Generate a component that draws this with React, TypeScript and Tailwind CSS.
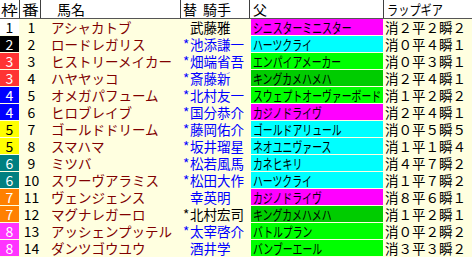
import React from "react";

type Row = {
  f: number;
  n: number;
  name: string;
  mark: string;
  jockey: string;
  blue: boolean;
  sire: string;
  sc: string;
  lap: string;
};

const M = "bg-[#ff00ff]";
const C = "bg-[#00ffff]";
const G = "bg-[#00ff00]";
const D = "bg-[#00cc00]";

const rows: Row[] = [
  { f: 1, n: 1, name: "アシャカトブ", mark: "", jockey: "武藤雅", blue: false, sire: "シニスターミニスター", sc: M, lap: "消２平２瞬２" },
  { f: 2, n: 2, name: "ロードレガリス", mark: "*", jockey: "池添謙一", blue: true, sire: "ハーツクライ", sc: C, lap: "消０平４瞬１" },
  { f: 3, n: 3, name: "ヒストリーメイカー", mark: "*", jockey: "畑端省吾", blue: true, sire: "エンパイアメーカー", sc: G, lap: "消０平３瞬１" },
  { f: 3, n: 4, name: "ハヤヤッコ", mark: "*", jockey: "斎藤新", blue: true, sire: "キングカメハメハ", sc: D, lap: "消２平４瞬１" },
  { f: 4, n: 5, name: "オメガパフューム", mark: "*", jockey: "北村友一", blue: true, sire: "スウェプトオーヴァーボード", sc: G, lap: "消１平２瞬２" },
  { f: 4, n: 6, name: "ヒロブレイブ", mark: "*", jockey: "国分恭介", blue: true, sire: "カジノドライヴ", sc: M, lap: "消２平４瞬１" },
  { f: 5, n: 7, name: "ゴールドドリーム", mark: "*", jockey: "藤岡佑介", blue: true, sire: "ゴールドアリュール", sc: C, lap: "消０平５瞬５" },
  { f: 5, n: 8, name: "スマハマ", mark: "*", jockey: "坂井瑠星", blue: true, sire: "ネオユニヴァース", sc: C, lap: "消１平１瞬４" },
  { f: 6, n: 9, name: "ミツバ", mark: "*", jockey: "松若風馬", blue: true, sire: "カネヒキリ", sc: C, lap: "消４平７瞬２" },
  { f: 6, n: 10, name: "スワーヴアラミス", mark: "*", jockey: "松田大作", blue: true, sire: "ハーツクライ", sc: C, lap: "消１平７瞬２" },
  { f: 7, n: 11, name: "ヴェンジェンス", mark: "", jockey: "幸英明", blue: true, sire: "カジノドライヴ", sc: M, lap: "消８平６瞬１" },
  { f: 7, n: 12, name: "マグナレガーロ", mark: "*", jockey: "北村宏司", blue: false, sire: "キングカメハメハ", sc: D, lap: "消１平２瞬１" },
  { f: 8, n: 13, name: "アッシェンプッテル", mark: "*", jockey: "太宰啓介", blue: true, sire: "バトルプラン", sc: G, lap: "消０平２瞬２" },
  { f: 8, n: 14, name: "ダンツゴウユウ", mark: "", jockey: "酒井学", blue: true, sire: "バンブーエール", sc: G, lap: "消３平３瞬２" },
];

const frameCls: Record<number, string> = {
  1: "bg-white text-black",
  2: "bg-black text-white",
  3: "bg-[#ff3333] text-white",
  4: "bg-[#0000ff] text-white",
  5: "bg-[#ffff00] text-black",
  6: "bg-[#008080] text-white",
  7: "bg-[#ff8000] text-white",
  8: "bg-[#ff33ff] text-white",
};

export default function App() {
  return (
    <div className="w-[472px] h-[257px] overflow-hidden bg-[#ffffe0] font-['Noto_Sans_CJK_JP','Noto_Sans_CJK_SC',sans-serif] text-[13.5px] leading-[16px] text-black">
      {/* header */}
      <div className="flex h-[19px] bg-white border-b border-[#555555] text-[14px] leading-[18px]">
        <div className="w-[20px] border-r border-[#404040] pl-[1px]">
          <span className="inline-block scale-x-[1.2] origin-left">枠</span>
        </div>
        <div className="w-[21px] border-r border-[#404040] pl-[2px]">
          <span className="inline-block scale-x-[1.2] origin-left">番</span>
        </div>
        <div className="w-[140px] border-r border-[#404040] pl-[16px]">馬名</div>
        <div className="w-[69px] border-r border-[#404040] pl-[2px] whitespace-nowrap">
          替<span className="ml-[6px]">騎手</span>
        </div>
        <div className="w-[134px] border-r border-[#404040] pl-[3px]">父</div>
        <div className="w-[88px] pl-[3px] whitespace-nowrap">
          <span className="inline-block scale-x-[0.8] origin-left">ラップギア</span>
        </div>
      </div>
      {/* rows */}
      {rows.map((r) => (
        <div key={r.n} className="flex h-[17px]">
          <div className="w-[20px] h-[16px]">
            <div className={`w-[19px] h-[16px] flex items-center justify-center text-[14px] ${frameCls[r.f]}`}>
              {r.f}
            </div>
          </div>
          <div className="w-[21px] h-[16px] flex items-center justify-center text-[14px] pl-[2px]">
            {r.n}
          </div>
          <div className="w-[140px] h-[16px] pl-[10px] text-[#800000] whitespace-nowrap">{r.name}</div>
          <div className={`w-[69px] h-[16px] pl-[2px] whitespace-nowrap ${r.blue ? "text-[#0000ff]" : "text-black"}`}>
            <span className="inline-block w-[7px]">{r.mark}</span>
            {r.jockey}
          </div>
          <div className="w-[134px] h-[16px] pl-[1px]">
            <div className={`w-[132px] h-[16px] pl-[2px] whitespace-nowrap ${r.sc}`}>
              <span className="inline-block scale-x-[0.73] origin-left">{r.sire}</span>
            </div>
          </div>
          <div className="w-[88px] h-[16px] pl-[1px] whitespace-nowrap">{r.lap}</div>
        </div>
      ))}
    </div>
  );
}
